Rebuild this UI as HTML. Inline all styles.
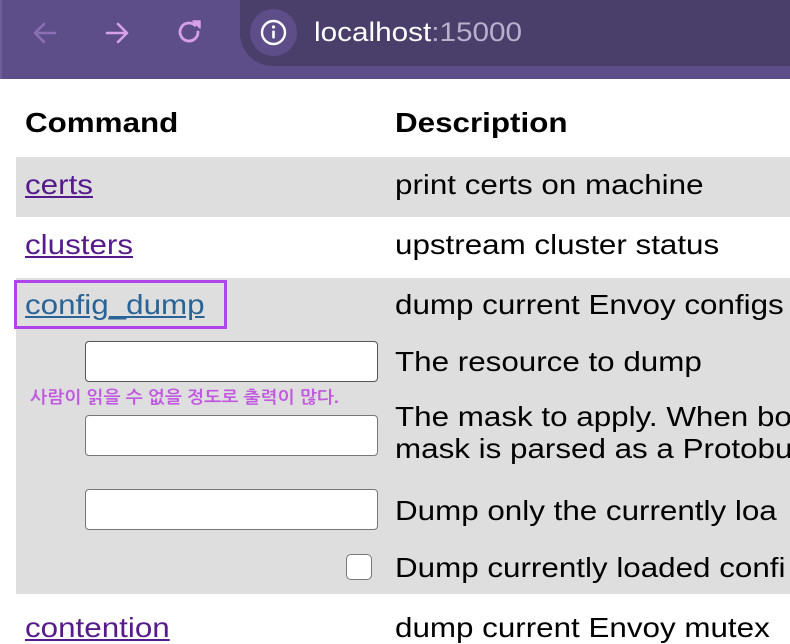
<!DOCTYPE html>
<html><head><meta charset="utf-8"><style>
*{margin:0;padding:0;box-sizing:border-box}
body{width:790px;height:620px;overflow:hidden;background:#fff;font-family:"Liberation Sans",Arial,sans-serif;position:relative}
.bar{position:absolute;left:0;top:0;width:790px;height:79px;background:#5d4d88;border-left:2px solid #6e5e99}
.pill{position:absolute;left:240px;top:0;width:600px;height:66px;background:#4a3e6a;border-radius:0 0 0 33px}
.info{position:absolute;left:250px;top:9px;width:47px;height:47px;border-radius:50%;background:#5d4d88}
.url{position:absolute;left:314px;top:17px;font-size:27px;color:#fff;transform:scaleX(1.1);transform-origin:left}
.url span{color:#b8b0cc}
.t{position:absolute;font-size:28px;color:#000;white-space:nowrap;transform:scaleX(1.12);transform-origin:left}
.h{font-weight:bold}
.row{position:absolute;left:16px;width:774px;background:#dedede}
a{color:#551a8b;text-decoration:underline}
.inp{position:absolute;left:85px;width:293px;height:41px;background:#fff;border:1.5px solid #777;border-radius:4px}
</style></head><body>
<div class="bar">
<svg style="position:absolute;left:28px;top:18px" width="30" height="30" viewBox="0 0 30 30"><path d="M25 15H5M14 6l-9 9 9 9" stroke="#8a6fb5" stroke-width="2.6" fill="none" stroke-linecap="round" stroke-linejoin="round"/></svg>
<svg style="position:absolute;left:100px;top:18px" width="30" height="30" viewBox="0 0 30 30"><path d="M5 15h20M16 6l9 9-9 9" stroke="#d9a0ea" stroke-width="2.6" fill="none" stroke-linecap="round" stroke-linejoin="round"/></svg>
<svg style="position:absolute;left:172px;top:17px" width="32" height="30" viewBox="0 0 32 30"><path d="M24 15a9 9 0 1 1-3-6.7" stroke="#d9a0ea" stroke-width="2.8" fill="none" stroke-linecap="round"/><path d="M19 4h7v7z" fill="#d9a0ea" stroke="#d9a0ea" stroke-width="1.5" stroke-linejoin="round"/></svg>
</div>
<div class="pill"></div>
<div class="info"></div>
<svg style="position:absolute;left:260px;top:19px" width="27" height="27" viewBox="0 0 27 27"><circle cx="13.5" cy="13.5" r="11.5" stroke="#fff" stroke-width="2.4" fill="none"/><rect x="12.2" y="11.5" width="2.6" height="8" rx="1" fill="#fff"/><circle cx="13.5" cy="8" r="1.6" fill="#fff"/></svg>
<div class="url">localhost<span>:15000</span></div>

<div class="t h" style="left:25px;top:107px">Command</div>
<div class="t h" style="left:395px;top:107px">Description</div>

<div class="row" style="top:157px;height:60px"></div>
<div class="row" style="top:278px;height:316px"></div>

<div class="t" style="left:25px;top:169px"><a>certs</a></div>
<div class="t" style="left:395px;top:169px">print certs on machine</div>
<div class="t" style="left:25px;top:229px"><a>clusters</a></div>
<div class="t" style="left:395px;top:229px">upstream cluster status</div>
<div style="position:absolute;left:14px;top:280px;width:213px;height:49px;border:3px solid #b044ea"></div>
<div class="t" style="left:25px;top:289px"><a style="color:#2a6496">config_dump</a></div>
<div class="t" style="left:395px;top:289px">dump current Envoy configs</div>

<div class="inp" style="top:341px;border-color:#555"></div>
<div class="t" style="left:395px;top:346px">The resource to dump</div>
<div style="position:absolute;left:30px;top:388px;font-size:17px;color:#c158e0;font-family:'Liberation Sans','NanumGothic','Noto Sans CJK KR',sans-serif;white-space:nowrap;font-weight:bold;transform:scaleX(1.07);transform-origin:left">사람이 읽을 수 없을 정도로 출력이 많다.</div>
<div class="inp" style="top:415px"></div>
<div class="t" style="left:395px;top:401px;line-height:32px">The mask to apply. When bo<br>mask is parsed as a Protobu</div>
<div class="inp" style="top:489px"></div>
<div class="t" style="left:395px;top:495px">Dump only the currently loa</div>
<div style="position:absolute;left:346px;top:554px;width:26px;height:26px;background:#fff;border:1.5px solid #777;border-radius:5px"></div>
<div class="t" style="left:395px;top:552px">Dump currently loaded confi</div>
<div class="t" style="left:25px;top:612px"><a>contention</a></div>
<div class="t" style="left:395px;top:612px">dump current Envoy mutex</div>
</body></html>
